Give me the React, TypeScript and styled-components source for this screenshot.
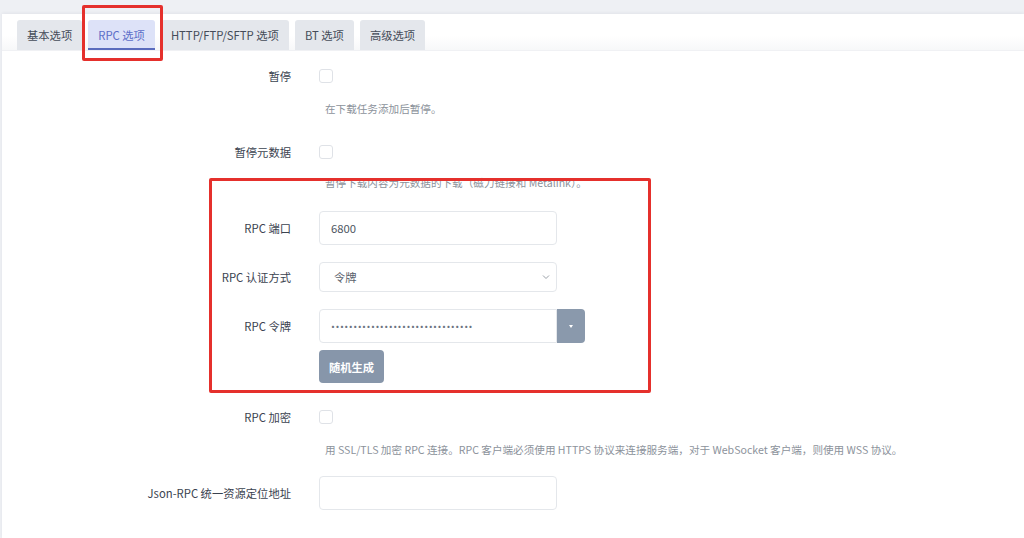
import React from "react";
import styled, { createGlobalStyle } from "styled-components";

const GlobalStyle = createGlobalStyle`
  html, body {
    margin: 0;
    padding: 0;
    background: #eef0f4;
    font-family: "Noto Sans CJK SC", "Noto Sans", sans-serif;
    font-size: 11.3px;
    color: #3b4350;
  }
`;

const Page = styled.div`
  position: relative;
  width: 1024px;
  height: 538px;
  overflow: hidden;
  padding-top: 14px;
  box-sizing: border-box;
`;

const Panel = styled.div`
  margin-left: 2px;
  height: 100%;
  background: #fff;
  box-shadow: 0 -1px 3px rgba(30, 40, 60, 0.06);
`;

const TabNav = styled.div`
  display: flex;
  gap: 6px;
  padding: 6px 0 0 15px;
  height: 30px;
  background: linear-gradient(to bottom, #fff 60%, #f7f8f9 100%);
  border-bottom: 1px solid #f0f1f4;
`;

const Tab = styled.div<{ $active?: boolean }>`
  display: flex;
  align-items: center;
  height: 30px;
  padding: 2px 10px 0;
  box-sizing: border-box;
  border-radius: 3px 3px 0 0;
  background: ${(p) => (p.$active ? "#dde2f8" : "#e4e7ec")};
  color: ${(p) => (p.$active ? "#5c6ec8" : "#454c59")};
  border-bottom: 2px solid ${(p) => (p.$active ? "#5a6bbd" : "transparent")};
  white-space: nowrap;
`;

const Form = styled.div`
  display: flex;
  flex-direction: column;
`;

const Row = styled.div<{ $mt: number }>`
  display: flex;
  align-items: center;
  margin-top: ${(p) => p.$mt}px;
`;

const Label = styled.div`
  width: 289px;
  flex: none;
  text-align: right;
  padding-right: 28px;
  box-sizing: content-box;
  color: #3b4350;
  line-height: 16px;
`;

const Checkbox = styled.span`
  display: block;
  width: 14px;
  height: 14px;
  box-sizing: border-box;
  border: 1px solid #dfe2e7;
  border-radius: 3px;
  background: #fff;
`;

const Help = styled.div<{ $mt: number }>`
  margin-top: ${(p) => p.$mt}px;
  margin-left: 323px;
  line-height: 16px;
  font-size: 10.6px;
  color: #8c929b;
  white-space: nowrap;
`;

const TextInput = styled.input<{ $h: number }>`
  width: 238px;
  height: ${(p) => p.$h}px;
  box-sizing: border-box;
  border: 1px solid #e4e7eb;
  border-radius: 4px;
  padding: 0 11px;
  font: inherit;
  color: #4d5561;
  background: #fff;
  outline: none;
`;

const SelectBox = styled.div`
  position: relative;
  display: flex;
  align-items: center;
  width: 238px;
  height: 30px;
  box-sizing: border-box;
  border: 1px solid #e4e7eb;
  border-radius: 4px;
  padding: 0 14px;
  color: #5a616c;
  svg {
    position: absolute;
    right: 5px;
    top: 50%;
    transform: translateY(-50%);
  }
`;

const InputGroup = styled.div`
  display: flex;
`;

const TokenInput = styled(TextInput)`
  border-radius: 4px 0 0 4px;
  font-family: "Inter", sans-serif;
  font-size: 7px;
  letter-spacing: 0.5px;
  color: #6b7280;
`;

const AddonButton = styled.button`
  width: 28px;
  height: 34px;
  border: none;
  border-radius: 0 4px 4px 0;
  background: #8a99ac;
  display: flex;
  align-items: center;
  justify-content: center;
  padding: 0;
  &::after {
    content: "";
    border-left: 2.5px solid transparent;
    border-right: 2.5px solid transparent;
    border-top: 3px solid #fff;
  }
`;

const Button = styled.button`
  margin-left: 317px;
  margin-top: 7px;
  width: 65px;
  height: 33px;
  border: none;
  border-radius: 4px;
  background: #8796aa;
  color: #fff;
  font: inherit;
  font-weight: 700;
  padding: 0;
  align-self: flex-start;
`;

const Annotation = styled.div<{ $x: number; $y: number; $w: number; $h: number }>`
  position: absolute;
  left: ${(p) => p.$x}px;
  top: ${(p) => p.$y}px;
  width: ${(p) => p.$w}px;
  height: ${(p) => p.$h}px;
  box-sizing: border-box;
  border: 3px solid #e5302c;
  border-radius: 2px;
  pointer-events: none;
`;

const tabs = ["基本选项", "RPC 选项", "HTTP/FTP/SFTP 选项", "BT 选项", "高级选项"];

export default function App() {
  return (
    <>
      <GlobalStyle />
      <Page>
        <Panel>
          <TabNav>
            {tabs.map((t) => (
              <Tab key={t} $active={t === "RPC 选项"}>
                {t}
              </Tab>
            ))}
          </TabNav>
          <Form>
            <Row $mt={17}>
              <Label>暂停</Label>
              <Checkbox />
            </Row>
            <Help $mt={17}>在下载任务添加后暂停。</Help>
            <Row $mt={27}>
              <Label>暂停元数据</Label>
              <Checkbox />
            </Row>
            <Help $mt={15}>暂停下载内容为元数据的下载（磁力链接和 Metalink）。</Help>
            <Row $mt={20}>
              <Label>RPC 端口</Label>
              <TextInput $h={34} defaultValue="6800" />
            </Row>
            <Row $mt={17}>
              <Label>RPC 认证方式</Label>
              <SelectBox>
                令牌
                <svg width="10" height="10" viewBox="0 0 10 10">
                  <path d="M2 3.5 L5 6.5 L8 3.5" fill="none" stroke="#9aa0a8" strokeWidth="1" />
                </svg>
              </SelectBox>
            </Row>
            <Row $mt={17}>
              <Label>RPC 令牌</Label>
              <InputGroup>
                <TokenInput $h={34} type="password" defaultValue="abcdefghijklmnopqrstuvwxyz123456" />
                <AddonButton />
              </InputGroup>
            </Row>
            <Button>随机生成</Button>
            <Row $mt={26}>
              <Label>RPC 加密</Label>
              <Checkbox />
            </Row>
            <Help $mt={17}>
              用 SSL/TLS 加密 RPC 连接。RPC 客户端必须使用 HTTPS 协议来连接服务端，对于 WebSocket 客户端，则使用 WSS 协议。
            </Help>
            <Row $mt={18}>
              <Label>Json-RPC 统一资源定位地址</Label>
              <TextInput $h={34} />
            </Row>
          </Form>
        </Panel>
        <Annotation $x={82} $y={5} $w={81} $h={56} />
        <Annotation $x={209} $y={178} $w={442} $h={215} />
      </Page>
    </>
  );
}
